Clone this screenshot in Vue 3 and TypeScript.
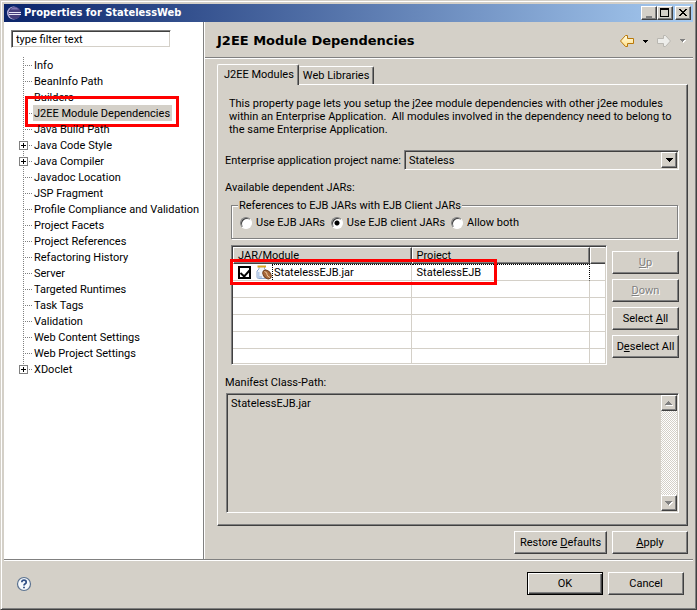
<script setup lang="ts">
import { ref } from 'vue'

interface TreeItem {
  label: string
  expandable?: boolean
}

interface JarRow {
  name: string
  project: string
  checked: boolean
}

const filter = ref('type filter text')
const selected = ref('J2EE Module Dependencies')
const project = ref('Stateless')
const reference = ref('client')
const manifest = ref('StatelessEJB.jar')

const tree: TreeItem[] = [
  { label: 'Info' },
  { label: 'BeanInfo Path' },
  { label: 'Builders' },
  { label: 'J2EE Module Dependencies' },
  { label: 'Java Build Path' },
  { label: 'Java Code Style', expandable: true },
  { label: 'Java Compiler', expandable: true },
  { label: 'Javadoc Location' },
  { label: 'JSP Fragment' },
  { label: 'Profile Compliance and Validation' },
  { label: 'Project Facets' },
  { label: 'Project References' },
  { label: 'Refactoring History' },
  { label: 'Server' },
  { label: 'Targeted Runtimes' },
  { label: 'Task Tags' },
  { label: 'Validation' },
  { label: 'Web Content Settings' },
  { label: 'Web Project Settings' },
  { label: 'XDoclet', expandable: true },
]

const references = [
  { value: 'jars', label: 'Use EJB JARs' },
  { value: 'client', label: 'Use EJB client JARs' },
  { value: 'both', label: 'Allow both' },
]

const jars = ref<JarRow[]>([{ name: 'StatelessEJB.jar', project: 'StatelessEJB', checked: true }])
const emptyRows = 5
</script>

<template>
  <div class="window">
    <header class="titlebar">
      <svg class="logo" width="16" height="16" viewBox="0 0 16 16" aria-hidden="true">
        <circle cx="7.5" cy="8" r="6.5" fill="#b9b4dc" />
        <circle cx="8.7" cy="8" r="6.2" fill="#453e7c" />
        <path d="M4.500 4.500Q8.500 0 13 4.500Z" fill="#7d76b4" />
        <path d="M3 7.500H15M3 9.500H15" stroke="#e6e6f6" stroke-width="1" />
      </svg>
      <h1>Properties for StatelessWeb</h1>
      <div class="window-buttons">
        <button type="button" aria-label="Minimize">
          <svg width="12" height="10" viewBox="0 0 12 10" shape-rendering="crispEdges"><path d="M3 8h6v2H3z" fill="#808080" /></svg>
        </button>
        <button type="button" aria-label="Maximize">
          <svg width="12" height="10" viewBox="0 0 12 10" shape-rendering="crispEdges"><path d="M1 0h9v9H1zM2 2v6h7V2z" fill="#000" fill-rule="evenodd" /></svg>
        </button>
        <button type="button" class="close" aria-label="Close">
          <svg width="12" height="10" viewBox="0 0 12 10" shape-rendering="crispEdges"><path d="M2 1h2v1h1v1h2V2h1V1h2v1H9v1H8v1H7v1h1v1h1v1h1v1H8V7H7V6H5v1H4v1H2V7h1V6h1V5h1V4H4V3H3V2H2z" fill="#000" /></svg>
        </button>
      </div>
    </header>

    <main class="body">
      <nav class="sidebar" aria-label="Property pages">
        <input v-model="filter" class="filter sunken" type="text" aria-label="Filter" />
        <ul class="tree">
          <li
            v-for="item in tree"
            :key="item.label"
            :class="{ selected: item.label === selected }"
            @click="selected = item.label"
          >
            <span class="twig">
              <button v-if="item.expandable" type="button" class="expander" :aria-label="'Expand ' + item.label">
                <svg width="7" height="7" viewBox="0 0 7 7" shape-rendering="crispEdges"><path d="M1 3h5v1H1zM3 1h1v5H3z" fill="#000" /></svg>
              </button>
            </span>
            <span class="name">{{ item.label }}</span>
            <span v-if="item.label === selected" class="mark"></span>
          </li>
        </ul>
      </nav>

      <section class="page">
        <div class="page-head">
          <h2>J2EE Module Dependencies</h2>
          <div class="history">
            <button type="button" aria-label="Back">
              <svg width="16" height="14" viewBox="0 0 16 14">
                <defs>
                  <linearGradient id="gold" x1="0" y1="0" x2="0" y2="1"><stop offset="0" stop-color="#fffbe0" /><stop offset="1" stop-color="#ffe08a" /></linearGradient>
                </defs>
                <path d="M1.5 7L6.5 1.5H8.5V4.5H14.5V9.5H8.5V12.5H6.5Z" fill="url(#gold)" stroke="#b9780a" stroke-linejoin="round" />
              </svg>
            </button>
            <button type="button" aria-label="Back history">
              <svg width="5" height="3" viewBox="0 0 5 3" shape-rendering="crispEdges"><path d="M0 0h5v1H4v1H3v1H2V2H1V1H0z" fill="#000" /></svg>
            </button>
            <button type="button" aria-label="Forward" disabled>
              <svg width="16" height="14" viewBox="0 0 16 14">
                <path d="M14.5 7L9.5 1.5H7.5V4.5H1.5V9.5H7.5V12.5H9.5Z" fill="#ededea" stroke="#b9b7b1" stroke-linejoin="round" />
              </svg>
            </button>
            <button type="button" aria-label="Forward history" disabled>
              <svg width="6" height="4" viewBox="0 0 6 4" shape-rendering="crispEdges"><path d="M1 1h5v1H5v1H4v1H3V3H2V2H1z" fill="#fff" /><path d="M0 0h5v1H4v1H3v1H2V2H1V1H0z" fill="#808080" /></svg>
            </button>
          </div>
        </div>

        <div class="page-content">
          <div class="tabs" role="tablist">
            <button type="button" role="tab" class="tab active" aria-selected="true">J2EE Modules</button>
            <button type="button" role="tab" class="tab" aria-selected="false">Web Libraries</button>
          </div>
          <div class="panel" role="tabpanel">
            <p class="intro">
              This property page lets you setup the j2ee module dependencies with other j2ee modules<br />
              within an Enterprise Application.&nbsp; All modules involved in the dependency need to belong to<br />
              the same Enterprise Application.
            </p>

            <div class="project-row">
              <label for="project">Enterprise application project name:</label>
              <div class="combo sunken">
                <select id="project" v-model="project">
                  <option>Stateless</option>
                </select>
                <span class="combo-arrow raised">
                  <svg width="7" height="4" viewBox="0 0 7 4" shape-rendering="crispEdges"><path d="M0 0h7v1H6v1H5v1H4v1H3V3H2V2H1V1H0z" fill="#000" /></svg>
                </span>
              </div>
            </div>

            <p class="caption">Available dependent JARs:</p>

            <fieldset class="group">
              <legend>References to EJB JARs with EJB Client JARs</legend>
              <label v-for="option in references" :key="option.value">
                <input v-model="reference" type="radio" name="reference" :value="option.value" />
                {{ option.label }}
              </label>
            </fieldset>

            <div class="jars">
              <div class="table-box sunken">
                <table>
                  <colgroup>
                    <col class="wide" />
                    <col class="wide" />
                    <col />
                  </colgroup>
                  <thead>
                    <tr>
                      <th>JAR/Module</th>
                      <th>Project</th>
                      <th></th>
                    </tr>
                  </thead>
                  <tbody>
                    <tr v-for="jar in jars" :key="jar.name" class="focused">
                      <td>
                        <label class="jar">
                          <input v-model="jar.checked" type="checkbox" />
                          <svg width="16" height="16" viewBox="0 0 16 16" aria-hidden="true">
                            <path d="M3 2.5H8.5V5L11 7V13Q11 14.500 9.500 14.500H2.500Q1 14.500 1 13V7L3 5Z" fill="#eef4fb" stroke="#8ea9cf" />
                            <path d="M2.500 8V13H6" fill="none" stroke="#b7cdea" stroke-width="2" />
                            <path d="M1.500 2.500H10" stroke="#d9a520" stroke-width="2" />
                            <ellipse cx="11" cy="10.500" rx="5" ry="3.500" transform="rotate(48 11 10.500)" fill="#a8693a" stroke="#6d3d1a" />
                            <path d="M8.500 7.500Q11.500 8.500 11 10.500Q11 12.500 14 13.500" fill="none" stroke="#f0cfa6" />
                          </svg>
                          <span>{{ jar.name }}</span>
                        </label>
                      </td>
                      <td>{{ jar.project }}</td>
                      <td></td>
                    </tr>
                    <tr v-for="n in emptyRows" :key="n">
                      <td></td>
                      <td></td>
                      <td></td>
                    </tr>
                  </tbody>
                </table>
                <span class="mark"></span>
              </div>
              <div class="actions">
                <button type="button" class="btn" disabled><u>U</u>p</button>
                <button type="button" class="btn" disabled><u>D</u>own</button>
                <button type="button" class="btn">Select <u>A</u>ll</button>
                <button type="button" class="btn">D<u>e</u>select All</button>
              </div>
            </div>

            <label class="manifest-label" for="manifest">Manifest Class-Path:</label>
            <div class="manifest sunken">
              <textarea id="manifest" v-model="manifest" readonly></textarea>
              <div class="scrollbar">
                <button type="button" class="raised" aria-label="Scroll up">
                  <svg width="8" height="5" viewBox="0 0 8 5" shape-rendering="crispEdges"><path d="M1 4h7v1H1z" fill="#fff" /><path d="M3 0h1v1h1v1h1v1h1v1H0V3h1V2h1V1h1z" fill="#808080" /></svg>
                </button>
                <button type="button" class="raised" aria-label="Scroll down">
                  <svg width="8" height="5" viewBox="0 0 8 5" shape-rendering="crispEdges"><path d="M1 1h7v1H7v1H6v1H5v1H4V4H3V3H2V2H1z" fill="#fff" /><path d="M0 0h7v1H6v1H5v1H4v1H3V3H2V2H1V1H0z" fill="#808080" /></svg>
                </button>
              </div>
            </div>
          </div>

          <div class="page-buttons">
            <button type="button" class="btn restore">Restore <u>D</u>efaults</button>
            <button type="button" class="btn dialog"><u>A</u>pply</button>
          </div>
        </div>
      </section>
    </main>

    <footer class="footer">
      <button type="button" class="help" aria-label="Help">
        <svg width="16" height="16" viewBox="0 0 16 16">
          <circle cx="8" cy="8" r="6.500" fill="#f4f8fc" stroke="#5b7290" stroke-width="1.200" />
          <path d="M5.800 6.300Q5.800 4.200 8 4.200T10.200 6.200Q10.200 7.300 8.900 8Q8 8.600 8 9.600" fill="none" stroke="#2f4f86" stroke-width="1.700" />
          <path d="M7.100 10.800H8.900V12.300H7.100Z" fill="#2f4f86" />
        </svg>
      </button>
      <button type="button" class="btn dialog default">OK</button>
      <button type="button" class="btn dialog">Cancel</button>
    </footer>
  </div>
</template>

<style>
body {
  background: #d4d0c8;
}
</style>

<style scoped>
* {
  box-sizing: border-box;
}

.window {
  --face: #d4d0c8;
  --shade: #808080;
  --dark: #404040;
  display: flex;
  flex-direction: column;
  min-height: 100vh;
  padding: 3px 3px 2px;
  border: 1px solid;
  border-color: var(--face) var(--dark) var(--dark) var(--face);
  box-shadow: inset 1px 1px #fff, inset -1px -1px var(--shade);
  background: var(--face);
  color: #000;
  font: 11px/13px Roboto, sans-serif;
}

button,
input,
select,
textarea {
  margin: 0;
  padding: 0;
  border: 0;
  border-radius: 0;
  outline: 0;
  background: none;
  color: inherit;
  font: inherit;
}

svg {
  display: block;
}

h1,
h2,
p,
ul {
  margin: 0;
  padding: 0;
}

.raised {
  border: 1px solid;
  border-color: #fff var(--dark) var(--dark) #fff;
  box-shadow: inset -1px -1px var(--shade);
  background: var(--face);
}

.sunken {
  border: 1px solid;
  border-color: var(--shade) #fff #fff var(--shade);
  box-shadow: inset 1px 1px var(--dark), inset -1px -1px var(--face);
}

.btn {
  height: 23px;
  border: 1px solid;
  border-color: #fff var(--dark) var(--dark) #fff;
  box-shadow: inset -1px -1px var(--shade);
  background: var(--face);
  text-align: center;
}

.btn:disabled {
  color: var(--shade);
  text-shadow: 1px 1px #fff;
}

.btn.default {
  border-color: #000;
  box-shadow: inset 1px 1px #fff, inset -1px -1px var(--dark), inset -2px -2px var(--shade);
}

.dialog {
  width: 76px;
}

.mark {
  position: absolute;
  border: 3px solid #f00;
  pointer-events: none;
}

.titlebar {
  display: flex;
  align-items: center;
  height: 18px;
  padding: 0 2px;
  background: linear-gradient(90deg, #0a246a, #a6caf0);
}

.titlebar h1 {
  flex: 1;
  margin-left: 2px;
  color: #fff;
  font: bold 11px/16px 'DejaVu Sans Condensed', 'DejaVu Sans', sans-serif;
}

.window-buttons {
  display: flex;
}

.window-buttons button {
  display: flex;
  justify-content: center;
  width: 16px;
  height: 14px;
  padding-top: 1px;
  border: 1px solid;
  border-color: #fff var(--dark) var(--dark) #fff;
  box-shadow: inset -1px -1px var(--shade);
  background: var(--face);
}

.window-buttons .close {
  margin-left: 2px;
}

.body {
  display: flex;
  flex: 1;
  border-bottom: 1px solid var(--shade);
}

.sidebar {
  flex: none;
  width: 200px;
  padding: 8px 7px;
  border-right: 1px solid var(--shade);
  background: #fff;
}

.filter {
  display: block;
  width: 160px;
  height: 18px;
  padding: 1px 4px 0;
}

.tree {
  margin-top: 9px;
  padding-left: 12px;
  list-style: none;
}

.tree li {
  position: relative;
  display: flex;
  height: 16px;
  line-height: 16px;
  white-space: nowrap;
}

.twig {
  position: relative;
  flex: none;
  width: 10px;
  background:
    repeating-linear-gradient(90deg, var(--shade) 0 1px, transparent 1px 2px) 0 8px / 9px 1px no-repeat,
    repeating-linear-gradient(180deg, var(--shade) 0 1px, transparent 1px 2px) 0 0 / 1px 16px no-repeat;
}

.tree li:last-child .twig {
  background-size: 9px 1px, 1px 8px;
}

.expander {
  position: absolute;
  top: 4px;
  left: -4px;
  width: 9px;
  height: 9px;
  border: 1px solid var(--shade);
  background: #fff;
}

.name {
  padding: 1px 2px 0 1px;
}

.selected .name {
  background: var(--face);
}

.tree .mark {
  top: -9px;
  left: 2px;
  width: 154px;
  height: 31px;
}

.page {
  display: flex;
  flex: 1;
  flex-direction: column;
  min-width: 0;
  border-left: 1px solid #fff;
}

.page-head {
  display: flex;
  align-items: center;
  justify-content: space-between;
  height: 37px;
  padding: 2px 7px 0 12px;
  border-bottom: 1px solid #fff;
  box-shadow: inset 0 -1px var(--shade);
}

.page-head h2 {
  font: bold 13px/16px 'DejaVu Sans', sans-serif;
}

.history {
  display: flex;
  align-items: center;
  gap: 8px;
}

.page-content {
  display: flex;
  flex: 1;
  flex-direction: column;
  padding: 5px 5px 5px 12px;
}

.tabs {
  display: flex;
  align-items: flex-end;
}

.tab {
  height: 18px;
  padding: 0 4px 0 3px;
  border: 1px solid;
  border-color: #fff var(--dark) transparent transparent;
  border-bottom: 0;
  border-radius: 0 2px 0 0;
  box-shadow: inset -1px 0 var(--shade);
}

.tab.active {
  z-index: 1;
  height: 21px;
  margin-bottom: -1px;
  padding: 0 4px 2px 6px;
  border-left-color: #fff;
  border-radius: 2px 2px 0 0;
  background: var(--face);
}

.panel {
  display: flex;
  flex: 1;
  flex-direction: column;
  padding: 12px 8px 12px 7px;
  border: 1px solid;
  border-color: #fff var(--dark) var(--dark) #fff;
  box-shadow: inset -1px -1px var(--shade);
}

.intro {
  padding-left: 4px;
  white-space: nowrap;
}

.project-row {
  display: flex;
  align-items: center;
  gap: 3px;
  margin-top: 14px;
}

.combo {
  display: flex;
  flex: 1;
  height: 20px;
  padding: 1px;
}

.combo select {
  flex: 1;
  padding-left: 3px;
  appearance: none;
}

.combo-arrow {
  display: flex;
  align-items: center;
  justify-content: center;
  width: 16px;
  pointer-events: none;
}

.caption {
  margin-top: 11px;
}

.group {
  display: flex;
  gap: 6px;
  margin: 5px 1px 0 6px;
  padding: 4px 8px 9px;
  border: 1px solid var(--shade);
  box-shadow: 1px 1px #fff, inset 1px 1px #fff;
}

.group legend {
  padding: 0 1px;
  margin-left: -2px;
  background: var(--face);
}

.group label {
  display: flex;
  align-items: center;
  gap: 4px;
}

.group input {
  width: 12px;
  height: 12px;
  border: 1px solid;
  border-color: var(--shade) #fff #fff var(--shade);
  border-radius: 50%;
  box-shadow: inset 1px 1px var(--dark);
  background: #fff;
  appearance: none;
}

.group input:checked {
  background: radial-gradient(circle, #000 2px, #fff 3px);
}

.jars {
  display: flex;
  gap: 5px;
  margin: 6px 0 0 6px;
}

.table-box {
  position: relative;
  flex: 1;
  height: 120px;
  padding: 1px;
  background: #fff;
}

.table-box table {
  width: 100%;
  table-layout: fixed;
  border-collapse: separate;
  border-spacing: 0;
}

.wide {
  width: 48%;
}

.table-box th {
  height: 17px;
  padding: 0 4px;
  border: 1px solid;
  border-color: #fff var(--dark) var(--dark) #fff;
  box-shadow: inset -1px -1px var(--shade);
  background: var(--face);
  font-weight: normal;
  line-height: 15px;
  text-align: left;
}

.table-box th:last-child {
  border-right: 0;
  box-shadow: inset 0 -1px var(--shade);
}

.table-box td {
  height: 17px;
  padding: 0 5px;
  border-right: 1px solid var(--face);
  border-bottom: 1px solid var(--face);
  line-height: 15px;
}

.table-box td:last-child {
  border-right: 0;
}

.table-box tr:last-child td {
  height: 14px;
  border-bottom: 0;
}

.focused td:nth-child(2) {
  border-top: 1px dotted #000;
  border-right: 1px dotted #000;
}

.jar {
  display: flex;
  align-items: center;
  height: 16px;
  margin-right: -5px;
}

.jar input {
  position: relative;
  width: 13px;
  height: 13px;
  margin-right: 5px;
  border: 2px solid #000;
  background: #fff;
  appearance: none;
}

.jar input:checked::after {
  content: '';
  position: absolute;
  top: 0;
  left: 2px;
  width: 4px;
  height: 7px;
  border: solid #000;
  border-width: 0 2px 2px 0;
  transform: rotate(42deg);
}

.jar span {
  flex: 1;
  height: 16px;
  padding-left: 1px;
  border: dotted #000;
  border-width: 1px 0 0 1px;
}

.table-box .mark {
  top: 13px;
  left: -2px;
  width: 267px;
  height: 26px;
}

.actions {
  display: flex;
  flex-direction: column;
  gap: 5px;
  width: 67px;
  padding-top: 6px;
}

.manifest-label {
  margin-top: 11px;
}

.manifest {
  display: flex;
  flex: 1;
  min-height: 118px;
  margin-top: 4px;
  margin-left: 1px;
  padding: 1px;
}

.manifest textarea {
  flex: 1;
  min-width: 0;
  padding: 2px 3px;
  resize: none;
}

.scrollbar {
  display: flex;
  flex-direction: column;
  justify-content: space-between;
  width: 16px;
  background: repeating-conic-gradient(#fff 0 25%, var(--face) 0 50%) 0 0 / 2px 2px;
}

.scrollbar button {
  display: flex;
  align-items: center;
  justify-content: center;
  height: 16px;
}

.page-buttons {
  display: flex;
  justify-content: flex-end;
  gap: 5px;
  margin-top: 5px;
}

.restore {
  width: 93px;
}

.footer {
  display: flex;
  align-items: center;
  gap: 5px;
  padding: 11px 9px 12px 12px;
  border-top: 1px solid #fff;
}

.help {
  margin-right: auto;
}
</style>
